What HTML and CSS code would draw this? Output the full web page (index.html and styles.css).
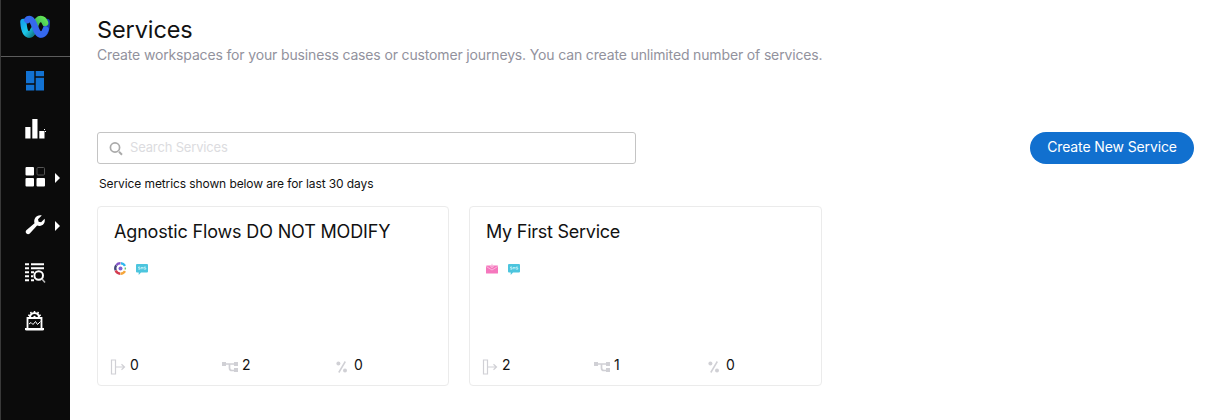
FILE: index.html
```html
<!DOCTYPE html>
<html lang="en">
<head>
<meta charset="utf-8">
<title>Services</title>
<link rel="stylesheet" href="styles.css">
</head>
<body>
<svg class="defs" aria-hidden="true">
  <symbol id="sms" viewBox="0 0 12 11">
    <path d="M1 0h10a1 1 0 0 1 1 1v6.500a1 1 0 0 1-1 1H5L2.700 11V8.500H1a1 1 0 0 1-1-1V1a1 1 0 0 1 1-1z" fill="#4cc5de"/>
    <path d="M4 3H2.500v1H4v1.200H2.300M5.200 5.300V3l.9 1.200L7 3v2.300M9.800 3H8.300v1h1.500v1.200H8.100" fill="none" stroke="#c9f2f8" stroke-width=".8"/>
  </symbol>
  <symbol id="entry" viewBox="0 0 16 16">
    <path d="M1.500 1h4v14h-4zM6 8h8.500M11.500 5.200 14.500 8l-3 2.800" fill="none" stroke="#d0d0d5" stroke-width="1.200"/>
  </symbol>
  <symbol id="flow" viewBox="0 0 16 12">
    <path d="M3 3h10M7.500 3v4q0 2.500 2.500 2.500h3" fill="none" stroke="#d0d0d5" stroke-width="1.700"/>
    <path d="M0 1h4v4H0zM12 1h4v4h-4zM12 7h4v4h-4z" fill="#d0d0d5"/>
  </symbol>
  <symbol id="percent" viewBox="0 0 12 12">
    <path d="M9.300.5 2.800 11.500" stroke="#d0d0d5" stroke-width="1.500"/>
    <circle cx="2.400" cy="2.500" r="2" fill="#d0d0d5"/><circle cx="9" cy="9.600" r="2" fill="#d0d0d5"/>
  </symbol>
</svg>
<div class="app">
  <nav class="sidebar">
    <div class="logo">
      <svg width="30" height="24" viewBox="0 0 31 24" preserveAspectRatio="none" fill="none" stroke-linecap="round" stroke-width="6.500">
        <defs>
          <linearGradient id="cyan" x1="0" y1="0" x2="1" y2="1"><stop offset="0" stop-color="#16a5ed"/><stop offset=".5" stop-color="#1cc8e8"/><stop offset="1" stop-color="#137f92"/></linearGradient>
          <linearGradient id="green" x1="0" y1="1" x2="1" y2="0"><stop offset="0" stop-color="#087a65"/><stop offset="1" stop-color="#62e456"/></linearGradient>
        </defs>
        <path d="M27.700 7C27.700 13 26.500 19.500 21.500 19.500" stroke="#173fae"/>
        <path d="M9.500 19.500C13 19.500 14.500 15 15.500 11.500S18 4 21.500 4C24 4 25 5.300 26 8" stroke="url(#green)"/>
        <path d="M3.500 7C4 14 5.500 19.500 9.500 19.500c2 0 3.200-1.500 4-4" stroke="url(#cyan)"/>
        <path d="M7.500 5C8 4.300 8.700 4 9.500 4c6 0 6 15.500 12 15.500 2.500 0 4-2 5-5" stroke="#3569ee"/>
      </svg>
    </div>
    <div class="item"><svg width="22" height="22" viewBox="0 0 22 22"><path d="M2 1h8.300v12.300H2zM11.700 1H20v5.300h-8.300zM2 14.700h8.300v5.800H2zM11.700 7.700H20v12.800h-8.300z" fill="#1272d3"/></svg></div>
    <div class="item"><svg width="22" height="22" viewBox="0 0 22 22"><path d="M1.300 9h5.200v11.500H1.300zM8.300 1h5.200v19.500H8.300zM15.300 13h5.200v7.500h-5.200zM20 11h1v1h-1zM22 13h-1v1h1z" fill="#fff"/></svg></div>
    <div class="item"><svg width="22" height="22" viewBox="0 0 22 22"><rect x="1.500" y="1" width="8.500" height="8.500" rx="1" fill="#fff"/><rect x="1.500" y="12" width="8.500" height="8.500" rx="1" fill="#fff"/><rect x="12.500" y="12" width="8.500" height="8.500" rx="1" fill="#fff"/><rect x="13" y="1.500" width="7.500" height="7.500" rx="1" fill="none" stroke="#555"/></svg><i class="arrow"></i></div>
    <div class="item"><svg width="22" height="22" viewBox="0 0 22 22"><path d="M17.800 1.500 14 5.300l.6 2.400 2.500.6 3.500-3.600c1 3.700-1.600 7.300-5.300 7.200-.8 0-1.500-.2-2.200-.5l-7.300 8c-2.300 2.200-5.400-.8-3.500-3.100l8.200-7.100C9.300 5 12.500.3 17.800 1.500z" fill="#fff"/></svg><i class="arrow"></i></div>
    <div class="item"><svg width="22" height="22" viewBox="0 0 22 22"><path d="M1 2.200h4M7 2.200h13M1 6.200h4M7 6.200h13M1 10.200h4M7 10.200h3M1 14.200h4M7 14.200h2M1 18.200h4M7 18.200h3" stroke="#fff" stroke-width="2"/><circle cx="14.700" cy="13.500" r="4.300" fill="#0b0b0b" stroke="#fff" stroke-width="2"/><path d="m18 17 3 3.500" stroke="#bbb" stroke-width="1.500"/></svg></div>
    <div class="item"><svg width="22" height="22" viewBox="0 0 22 22"><path d="M6 7.500A4.400 4.400 0 0 1 15 7.500" fill="none" stroke="#fff" stroke-width="2"/><path d="M10.500 1v2M6.500 2l1.200 2M14.500 2l-1.200 2M4.300 5l2 1M16.700 5l-2 1" stroke="#fff" stroke-width="1.500"/><path d="M3.500 18V8h14v10" fill="none" stroke="#fff" stroke-width="1.800"/><path d="M1 18h19v1.200q0 1.300-1.500 1.300h-16Q1 20.500 1 19.200z" fill="#fff"/><path d="m5 14 2-1.500 2 2 2.500-3 2 3 3-3" fill="none" stroke="#fff"/><circle cx="10.500" cy="7" r="1.200" fill="#fff"/></svg></div>
  </nav>
  <main class="main">
    <h1 class="title">Services</h1>
    <p class="subtitle">Create workspaces for your business cases or customer journeys. You can create unlimited number of services.</p>
    <div class="toolbar">
      <div class="search">
        <svg width="16" height="16" viewBox="0 0 16 16" fill="none" stroke="#aaa"><circle cx="6" cy="6.500" r="4.600" stroke-width="1.700"/><path d="m10 10.800 3 3" stroke-width="2"/></svg>
        <span class="placeholder">Search Services</span>
      </div>
      <button class="create"><span>Create New Service</span></button>
    </div>
    <p class="note">Service metrics shown below are for last 30 days</p>
    <div class="cards">
      <article class="card">
        <h2 class="name agnostic">Agnostic Flows DO NOT MODIFY</h2>
        <div class="channels">
          <svg width="13" height="13" viewBox="0 0 13 13" fill="none" stroke-width="2.400">
            <path d="M2.300 3.200A5.200 5.200 0 0 1 6.500 1.300" stroke="#8656c8"/><path d="M7 1.300a5.200 5.200 0 0 1 4 2.500" stroke="#30b8ed"/>
            <path d="M1.700 8.300A5.200 5.200 0 0 1 2.200 3.400" stroke="#414579"/><path d="M6.200 11.700A5.200 5.200 0 0 1 1.700 8.500" stroke="#d43c50"/>
            <path d="M11 9.200a5.200 5.200 0 0 1-4.500 2.500" stroke="#f5a63b"/><path d="M11.300 5.500v2" stroke="#6fc77a" stroke-width="1.500"/><circle cx="6.500" cy="6.500" r="2" fill="#8060d5"/>
          </svg>
          <svg class="sms" width="12" height="11"><use href="#sms"/></svg>
        </div>
        <div class="metrics">
          <div class="metric"><svg class="ic-entry"><use href="#entry"/></svg><span>0</span></div>
          <div class="metric"><svg class="ic-flow"><use href="#flow"/></svg><span>2</span></div>
          <div class="metric"><svg class="ic-percent"><use href="#percent"/></svg><span>0</span></div>
        </div>
      </article>
      <article class="card">
        <h2 class="name first">My First Service</h2>
        <div class="channels">
          <svg width="13" height="13" viewBox="0 0 13 13"><path d="M1 3.500h10.500q.5 0 .5.500v7q0 .5-.5.500h-11q-.5 0-.5-.5V4q0-.5 1-.5z" fill="#f577bd"/><path d="M6 1.800v4M4.300 4 6 5.800l1.700-1.800M.3 4.500 6 8l5.700-3.500" fill="none" stroke="#fbb5dc"/></svg>
          <svg class="sms" width="12" height="11"><use href="#sms"/></svg>
        </div>
        <div class="metrics">
          <div class="metric"><svg class="ic-entry"><use href="#entry"/></svg><span>2</span></div>
          <div class="metric"><svg class="ic-flow"><use href="#flow"/></svg><span>1</span></div>
          <div class="metric"><svg class="ic-percent"><use href="#percent"/></svg><span>0</span></div>
        </div>
      </article>
    </div>
  </main>
</div>
</body>
</html>
```
FILE: styles.css
```css
* { box-sizing: border-box; margin: 0; padding: 0; }
body { background: #fff; color: #121212; font-family: Inter, "Liberation Sans", sans-serif; overflow: hidden; }
svg { display: block; flex: none; }
.defs { display: none; }
.app { display: flex; height: 420px; }
.sidebar { width: 70px; flex: none; background: #0b0b0b; border-left: 1px solid #393939; }
.logo { height: 57px; border-bottom: 1px solid #5c5c5c; display: flex; padding: 15px 0 0 19px; }
.item { height: 48px; display: flex; align-items: center; padding-left: 23px; gap: 9px; }
.arrow { border-left: 5px solid #fff; border-top: 5px solid transparent; border-bottom: 5px solid transparent; margin-top: 2px; }
.main { flex: 1; padding: 15px 26px 0 27px; }
.title { font-size: 23.5px; line-height: 30px; font-weight: 400; letter-spacing: -.1px; white-space: nowrap; }
.subtitle { font-size: 14px; line-height: 20px; color: #92929d; letter-spacing: -.15px; white-space: nowrap; }
.toolbar { display: flex; justify-content: space-between; margin-top: 67px; }
.search { width: 539px; height: 32px; border: 1px solid #c4c4c4; border-radius: 3px; display: flex; align-items: center; padding-left: 11px; gap: 5px; }
.search svg { margin-top: 2px; }
.placeholder { font-size: 13px; color: #dcdce0; line-height: 18px; letter-spacing: -.16px; margin-top: -2px; }
.create { width: 164px; height: 32px; border: 0; border-radius: 16px; background: #1170cf; color: #fff; font: 400 14px/20px Inter, sans-serif; letter-spacing: -.12px; padding-bottom: 2px; white-space: nowrap; }
.note { font-size: 12px; line-height: 16px; letter-spacing: -.1px; margin: 12px 0 0 2px; }
.cards { display: grid; grid-template-columns: 352px 353px; gap: 20px; margin-top: 14px; }
.card { height: 180px; border: 1px solid #ebebeb; border-radius: 4px; padding: 13px 12px 0; display: flex; flex-direction: column; }
.name { font-size: 18px; line-height: 24px; font-weight: 400; padding-left: 4px; white-space: nowrap; }
.agnostic { letter-spacing: -.16px; }
.first { letter-spacing: -.25px; }
.channels { display: flex; gap: 9px; padding: 18px 0 0 4px; height: 32px; }
.sms { margin-top: 2px; }
.metrics { display: grid; grid-template-columns: 112px 112px 112px; margin-top: 79px; }
.metric { display: flex; align-items: center; height: 20px; font-size: 14px; line-height: 20px; }
.metric svg { margin-top: 3px; }
.ic-entry { width: 16px; height: 16px; margin-right: 4px; }
.ic-flow { width: 16px; height: 12px; margin-right: 4px; }
.ic-percent { width: 12px; height: 12px; margin: 0 6px 0 2px; }
```
